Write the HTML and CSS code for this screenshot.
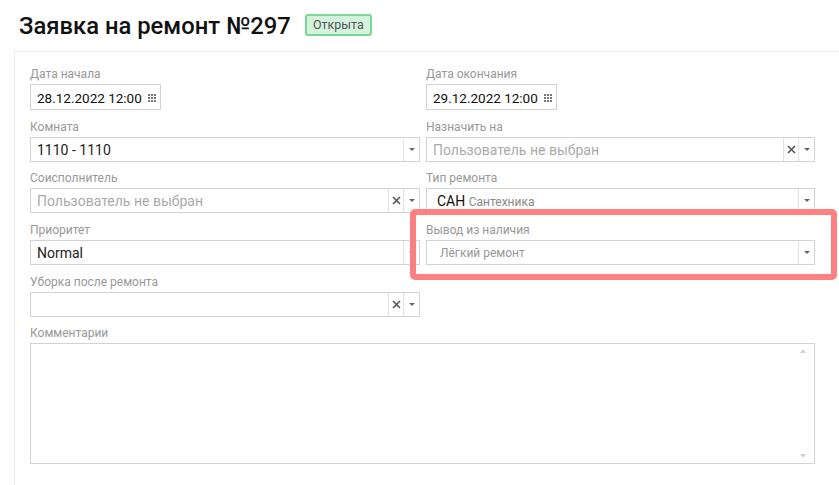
FILE: index.html
```html
<!DOCTYPE html>
<html lang="ru">
<head>
  <meta charset="UTF-8" />
  <title>Заявка на ремонт №297</title>
  <link rel="stylesheet" href="styles.css">
</head>
<body>

  <!-- заголовок -->
  <div class="head">
    <h1 class="title">Заявка на ремонт №297</h1>
    <span class="badge">Открыта</span>
  </div>

  <!-- форма заявки -->
  <div class="panel">
    <div class="form">

      <div class="field">
        <div class="lbl">Дата начала</div>
        <div class="date">
          <span>28.12.2022 12:00</span>
          <svg class="cal" width="8" height="8" viewBox="0 0 8 8"><g fill="#777"><rect x="0" y="0" width="2" height="2"/><rect x="3" y="0" width="2" height="2"/><rect x="6" y="0" width="2" height="2"/><rect x="0" y="3" width="2" height="2"/><rect x="3" y="3" width="2" height="2"/><rect x="6" y="3" width="2" height="2"/><rect x="0" y="6" width="2" height="2"/><rect x="3" y="6" width="2" height="2"/><rect x="6" y="6" width="2" height="2"/></g></svg>
        </div>
      </div>

      <div class="field">
        <div class="lbl">Дата окончания</div>
        <div class="date">
          <span>29.12.2022 12:00</span>
          <svg class="cal" width="8" height="8" viewBox="0 0 8 8"><g fill="#777"><rect x="0" y="0" width="2" height="2"/><rect x="3" y="0" width="2" height="2"/><rect x="6" y="0" width="2" height="2"/><rect x="0" y="3" width="2" height="2"/><rect x="3" y="3" width="2" height="2"/><rect x="6" y="3" width="2" height="2"/><rect x="0" y="6" width="2" height="2"/><rect x="3" y="6" width="2" height="2"/><rect x="6" y="6" width="2" height="2"/></g></svg>
        </div>
      </div>

      <div class="field">
        <div class="lbl">Комната</div>
        <div class="sel">
          <div class="sel-val">1110 - 1110</div>
          <div class="sel-arr"><span class="tri"></span></div>
        </div>
      </div>

      <div class="field">
        <div class="lbl">Назначить на</div>
        <div class="sel">
          <div class="sel-val empty">Пользователь не выбран</div>
          <div class="sel-clr"><svg width="9" height="9" viewBox="0 0 9 9"><path d="M1 1L8 8M8 1L1 8" stroke="#555" stroke-width="1.6"/></svg></div>
          <div class="sel-arr"><span class="tri"></span></div>
        </div>
      </div>

      <div class="field">
        <div class="lbl">Соисполнитель</div>
        <div class="sel">
          <div class="sel-val empty">Пользователь не выбран</div>
          <div class="sel-clr"><svg width="9" height="9" viewBox="0 0 9 9"><path d="M1 1L8 8M8 1L1 8" stroke="#555" stroke-width="1.6"/></svg></div>
          <div class="sel-arr"><span class="tri"></span></div>
        </div>
      </div>

      <div class="field">
        <div class="lbl">Тип ремонта</div>
        <div class="sel">
          <div class="sel-val code">САН <small>Сантехника</small></div>
          <div class="sel-arr"><span class="tri"></span></div>
        </div>
      </div>

      <div class="field">
        <div class="lbl">Приоритет</div>
        <div class="sel">
          <div class="sel-val">Normal</div>
          <div class="sel-arr"><span class="tri"></span></div>
        </div>
      </div>

      <div class="field">
        <div class="lbl">Вывод из наличия</div>
        <div class="sel">
          <div class="sel-val light">Лёгкий ремонт</div>
          <div class="sel-arr"><span class="tri"></span></div>
        </div>
      </div>

      <div class="field">
        <div class="lbl">Уборка после ремонта</div>
        <div class="sel">
          <div class="sel-val"></div>
          <div class="sel-clr"><svg width="9" height="9" viewBox="0 0 9 9"><path d="M1 1L8 8M8 1L1 8" stroke="#555" stroke-width="1.6"/></svg></div>
          <div class="sel-arr"><span class="tri"></span></div>
        </div>
      </div>

      <div class="field"></div>

      <div class="field wide">
        <div class="lbl">Комментарии</div>
        <div class="memo">
          <span class="scr up"></span>
          <span class="scr down"></span>
        </div>
      </div>

    </div>
  </div>

  <!-- выделение поля -->
  <div class="mark"></div>

</body>
</html>
```

FILE: styles.css
```css
body {
  margin: 0;
  font-family: Roboto, "Noto Sans", Arial, sans-serif;
  background: #fff;
  color: #222;
  overflow: hidden;
  position: relative;
  height: 485px;
}

.head {
  display: flex;
  align-items: center;
  gap: 14px;
  margin: 12px 0 0 19px;
  height: 28px;
}

.title {
  margin: 0;
  font-size: 23.8px;
  line-height: 28px;
  font-weight: 500;
  color: #111;
}

.badge {
  display: inline-block;
  box-sizing: border-box;
  height: 22px;
  line-height: 18px;
  padding: 0 6px;
  font-size: 12.5px;
  color: #555;
  background: #d3f3dd;
  border: 2px solid #7ad896;
  border-radius: 3px;
  margin-top: -2px;
}

.panel {
  margin: 11px 0 0 14px;
  border-top: 1px solid #ececec;
  border-left: 1px solid #ececec;
  padding: 14px 0 20px 15px;
  height: 420px;
}

.form {
  display: grid;
  grid-template-columns: 390px 389px;
  column-gap: 6px;
  row-gap: 8.7px;
}

.field.wide {
  grid-column: 1 / 3;
}

.lbl {
  font-size: 12px;
  line-height: 16px;
  color: #999;
  margin-bottom: 2px;
}

.date {
  display: flex;
  align-items: center;
  justify-content: space-between;
  box-sizing: border-box;
  width: 131px;
  height: 26px;
  padding: 1px 4px 0 6px;
  border: 1px solid #d2d2d2;
  font-size: 13.5px;
  color: #111;
}

.sel {
  display: flex;
  box-sizing: border-box;
  height: 25px;
  border: 1px solid #d2d2d2;
}

.sel-val {
  flex: 1;
  padding: 1px 6px 0;
  font-size: 14px;
  line-height: 23px;
  color: #222;
  white-space: nowrap;
  overflow: hidden;
}

.sel-val.empty {
  color: #aaa;
}

.sel-val.code {
  padding-left: 10px;
  color: #111;
}

.sel-val.code small {
  font-size: 12px;
  color: #888;
}

.sel-val.light {
  padding-left: 13px;
  font-size: 12px;
  color: #999;
}

.sel-clr,
.sel-arr {
  display: flex;
  align-items: center;
  justify-content: center;
  border-left: 1px solid #e2e2e2;
}

.sel-clr {
  width: 14px;
}

.sel-arr {
  width: 15px;
}

.tri {
  width: 0;
  height: 0;
  border-left: 3px solid transparent;
  border-right: 3px solid transparent;
  border-top: 3px solid #666;
}

.memo {
  position: relative;
  box-sizing: border-box;
  height: 121px;
  border: 1px solid #d2d2d2;
}

.scr {
  position: absolute;
  right: 8px;
  width: 0;
  height: 0;
  border-left: 3px solid transparent;
  border-right: 3px solid transparent;
}

.scr.up {
  top: 5px;
  border-bottom: 4px solid #d0d0d0;
}

.scr.down {
  bottom: 5px;
  border-top: 4px solid #d0d0d0;
}

.mark {
  position: absolute;
  left: 410px;
  top: 209px;
  width: 427px;
  height: 71px;
  box-sizing: border-box;
  border: 6px solid #ff8080;
  border-radius: 5px;
  pointer-events: none;
}
```
